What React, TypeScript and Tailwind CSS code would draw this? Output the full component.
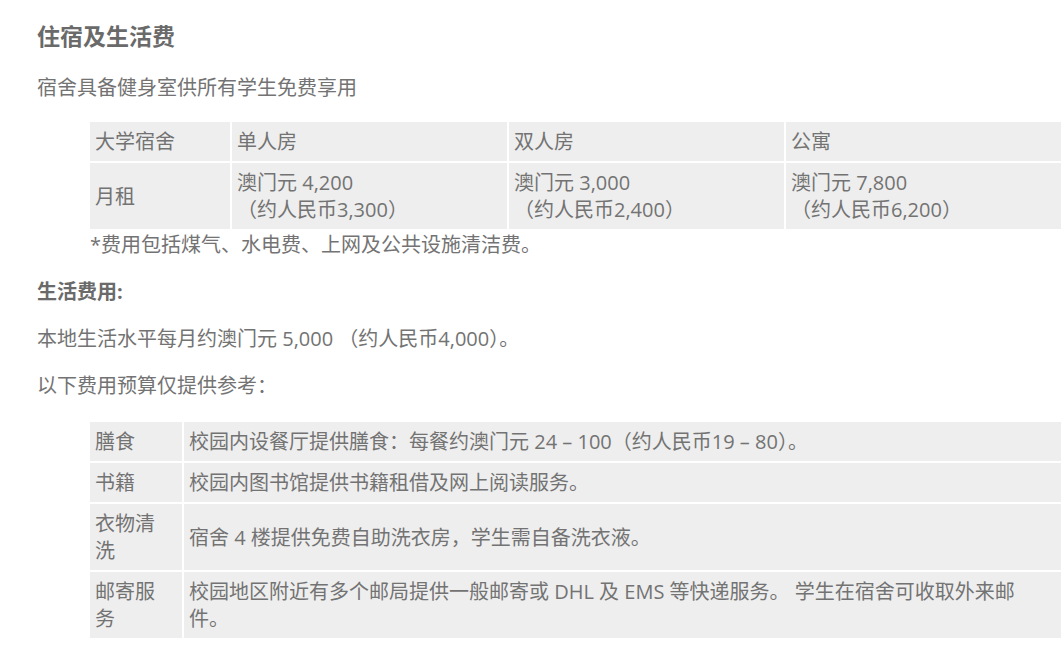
import React from "react";

const cell = "bg-[#eeeeee] px-[5px] py-[6px] align-middle text-left font-normal";

export default function App() {
  return (
    <div className="min-h-[653px] w-[1064px] bg-white text-[#737373] font-['Open_Sans','Noto_Sans_CJK_SC',sans-serif] text-[20px] leading-[27px]">
      <div className="pl-[37px] pt-[20px]">
        <h2 className="text-[23px] leading-[32px] font-bold text-[#6a6a6a]">住宿及生活费</h2>
        <p className="mt-[22px]">宿舍具备健身室供所有学生免费享用</p>

        <table className="mt-[19px] ml-[51px] table-fixed border-separate border-spacing-[2px] w-[975px]">
          <tbody>
            <tr>
              <td className={`${cell} w-[140px]`}>大学宿舍</td>
              <td className={cell}>单人房</td>
              <td className={cell}>双人房</td>
              <td className={cell}>公寓</td>
            </tr>
            <tr>
              <td className={cell}>月租</td>
              <td className={cell}>
                澳门元 4,200
                <br />
                （约人民币3,300）
              </td>
              <td className={cell}>
                澳门元 3,000
                <br />
                （约人民币2,400）
              </td>
              <td className={cell}>
                澳门元 7,800
                <br />
                （约人民币6,200）
              </td>
            </tr>
          </tbody>
        </table>
        <p className="ml-[53px]">*费用包括煤气、水电费、上网及公共设施清洁费。</p>

        <p className="mt-[20px] font-bold text-[#6a6a6a]">生活费用:</p>
        <p className="mt-[20px]">本地生活水平每月约澳门元 5,000 （约人民币4,000）。</p>
        <p className="mt-[20px]">以下费用预算仅提供参考：</p>

        <table className="mt-[21px] ml-[51px] table-fixed border-separate border-spacing-[2px] w-[975px]">
          <tbody>
            <tr>
              <td className={`${cell} w-[92px]`}>膳食</td>
              <td className={cell}>校园内设餐厅提供膳食：每餐约澳门元 24 – 100（约人民币19 – 80）。</td>
            </tr>
            <tr>
              <td className={cell}>书籍</td>
              <td className={cell}>校园内图书馆提供书籍租借及网上阅读服务。</td>
            </tr>
            <tr>
              <td className={cell}>
                衣物清
                <br />
                洗
              </td>
              <td className={cell}>宿舍 4 楼提供免费自助洗衣房，学生需自备洗衣液。</td>
            </tr>
            <tr>
              <td className={cell}>
                邮寄服
                <br />
                务
              </td>
              <td className={cell}>
                校园地区附近有多个邮局提供一般邮寄或 DHL 及 EMS 等快递服务。 学生在宿舍可收取外来邮
                <br />
                件。
              </td>
            </tr>
          </tbody>
        </table>
      </div>
    </div>
  );
}
